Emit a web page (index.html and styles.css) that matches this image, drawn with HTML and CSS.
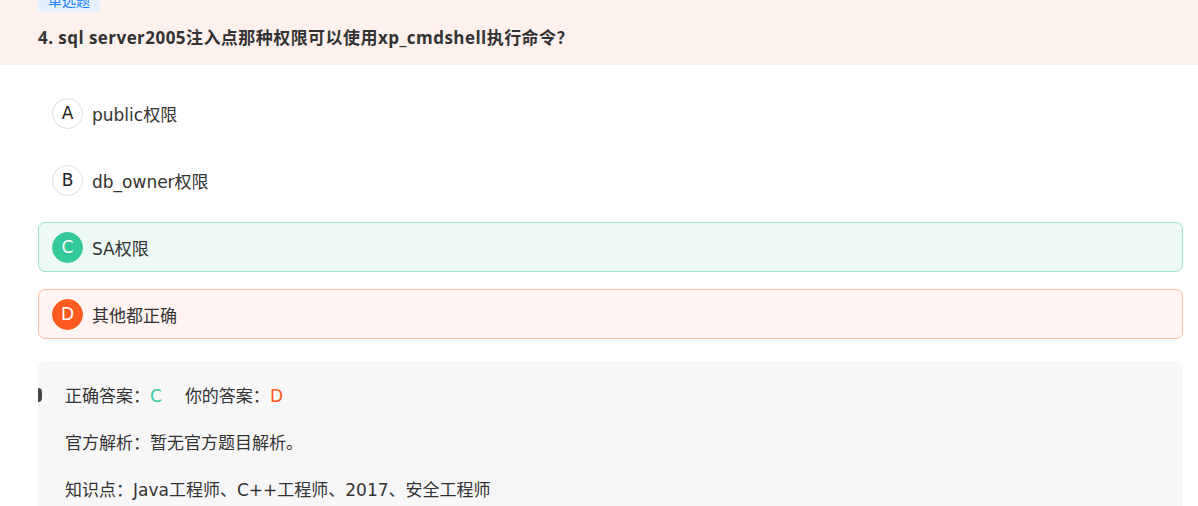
FILE: index.html
```html
<!DOCTYPE html>
<html lang="zh-CN">
<head>
<meta charset="utf-8">
<title>单选题</title>
<link rel="stylesheet" href="styles.css">
</head>
<body>
<div class="header">
  <span class="tag">单选题</span>
  <div class="title">4. sql server2005注入点那种权限可以使用xp_cmdshell执行命令？</div>
</div>
<div class="content">
  <div class="option"><span class="badge">A</span><span class="opt-text">public权限</span></div>
  <div class="option"><span class="badge">B</span><span class="opt-text">db_owner权限</span></div>
  <div class="option right"><span class="badge">C</span><span class="opt-text">SA权限</span></div>
  <div class="option wrong"><span class="badge">D</span><span class="opt-text">其他都正确</span></div>
  <div class="analysis">
    <span class="dot"></span>
    <div class="line">正确答案：<span class="green">C</span><span class="mine">你的答案：<span class="red">D</span></span></div>
    <div class="line">官方解析：暂无官方题目解析。</div>
    <div class="line">知识点：Java工程师、C++工程师、2017、安全工程师</div>
  </div>
</div>
</body>
</html>
```
FILE: styles.css
```css
* { box-sizing: border-box; }
html, body {
  margin: 0;
  padding: 0;
  background: #fff;
  font-family: "DejaVu Sans", "Noto Sans CJK SC", sans-serif;
  color: #333;
  overflow: hidden;
}
.header {
  background: #fdf1ed;
  padding: 0 15px 0 38px;
  height: 65px;
  display: flex;
  flex-direction: column;
  align-items: flex-start;
}
.tag {
  display: block;
  margin-top: -12px;
  height: 24px;
  line-height: 24px;
  padding: 0 10px;
  background: #e3f1ff;
  color: #1e7fff;
  font-family: "Noto Sans CJK SC", sans-serif;
  font-size: 14px;
  border-radius: 4px;
}
.title {
  margin-top: 13px;
  font-family: "Open Sans", "Noto Sans CJK SC", sans-serif;
  font-size: 17px;
  line-height: 26px;
  font-weight: bold;
  letter-spacing: 0.45px;
  color: #333;
}
.content {
  padding: 23px 15px 0 38px;
}
.option {
  display: flex;
  align-items: center;
  height: 50px;
  padding-left: 13px;
  border: 1px solid transparent;
  border-radius: 7px;
  margin-bottom: 17px;
  font-size: 17px;
}
.badge {
  width: 31px;
  height: 31px;
  border-radius: 50%;
  border: 1px solid #dedede;
  background: #fff;
  display: flex;
  align-items: center;
  justify-content: center;
  font-size: 17px;
  color: #222;
  flex: none;
}
.opt-text {
  margin-left: 9px;
  color: #333;
}
.option.right {
  background: #ecf9f5;
  border-color: #9ce4cb;
}
.option.right .badge {
  background: #34c99a;
  border-color: #34c99a;
  color: #fff;
}
.option.wrong {
  background: #fff4f1;
  border-color: #ffbea8;
}
.option.wrong .badge {
  background: #ff5a1f;
  border-color: #ff5a1f;
  color: #fff;
}
.analysis {
  position: relative;
  margin-top: 22px;
  background: #f7f7f7;
  border-radius: 8px;
  padding: 22px 27px 20px;
  min-height: 160px;
}
.dot {
  position: absolute;
  left: 0;
  top: 27px;
  width: 4px;
  height: 14px;
  background: #444;
  border-radius: 0 5px 5px 0;
}
.line {
  font-size: 17px;
  line-height: 26px;
  margin-bottom: 21px;
  color: #333;
}
.green { color: #34c99a; }
.red { color: #ff5a1f; }
.mine { margin-left: 23px; }
```
